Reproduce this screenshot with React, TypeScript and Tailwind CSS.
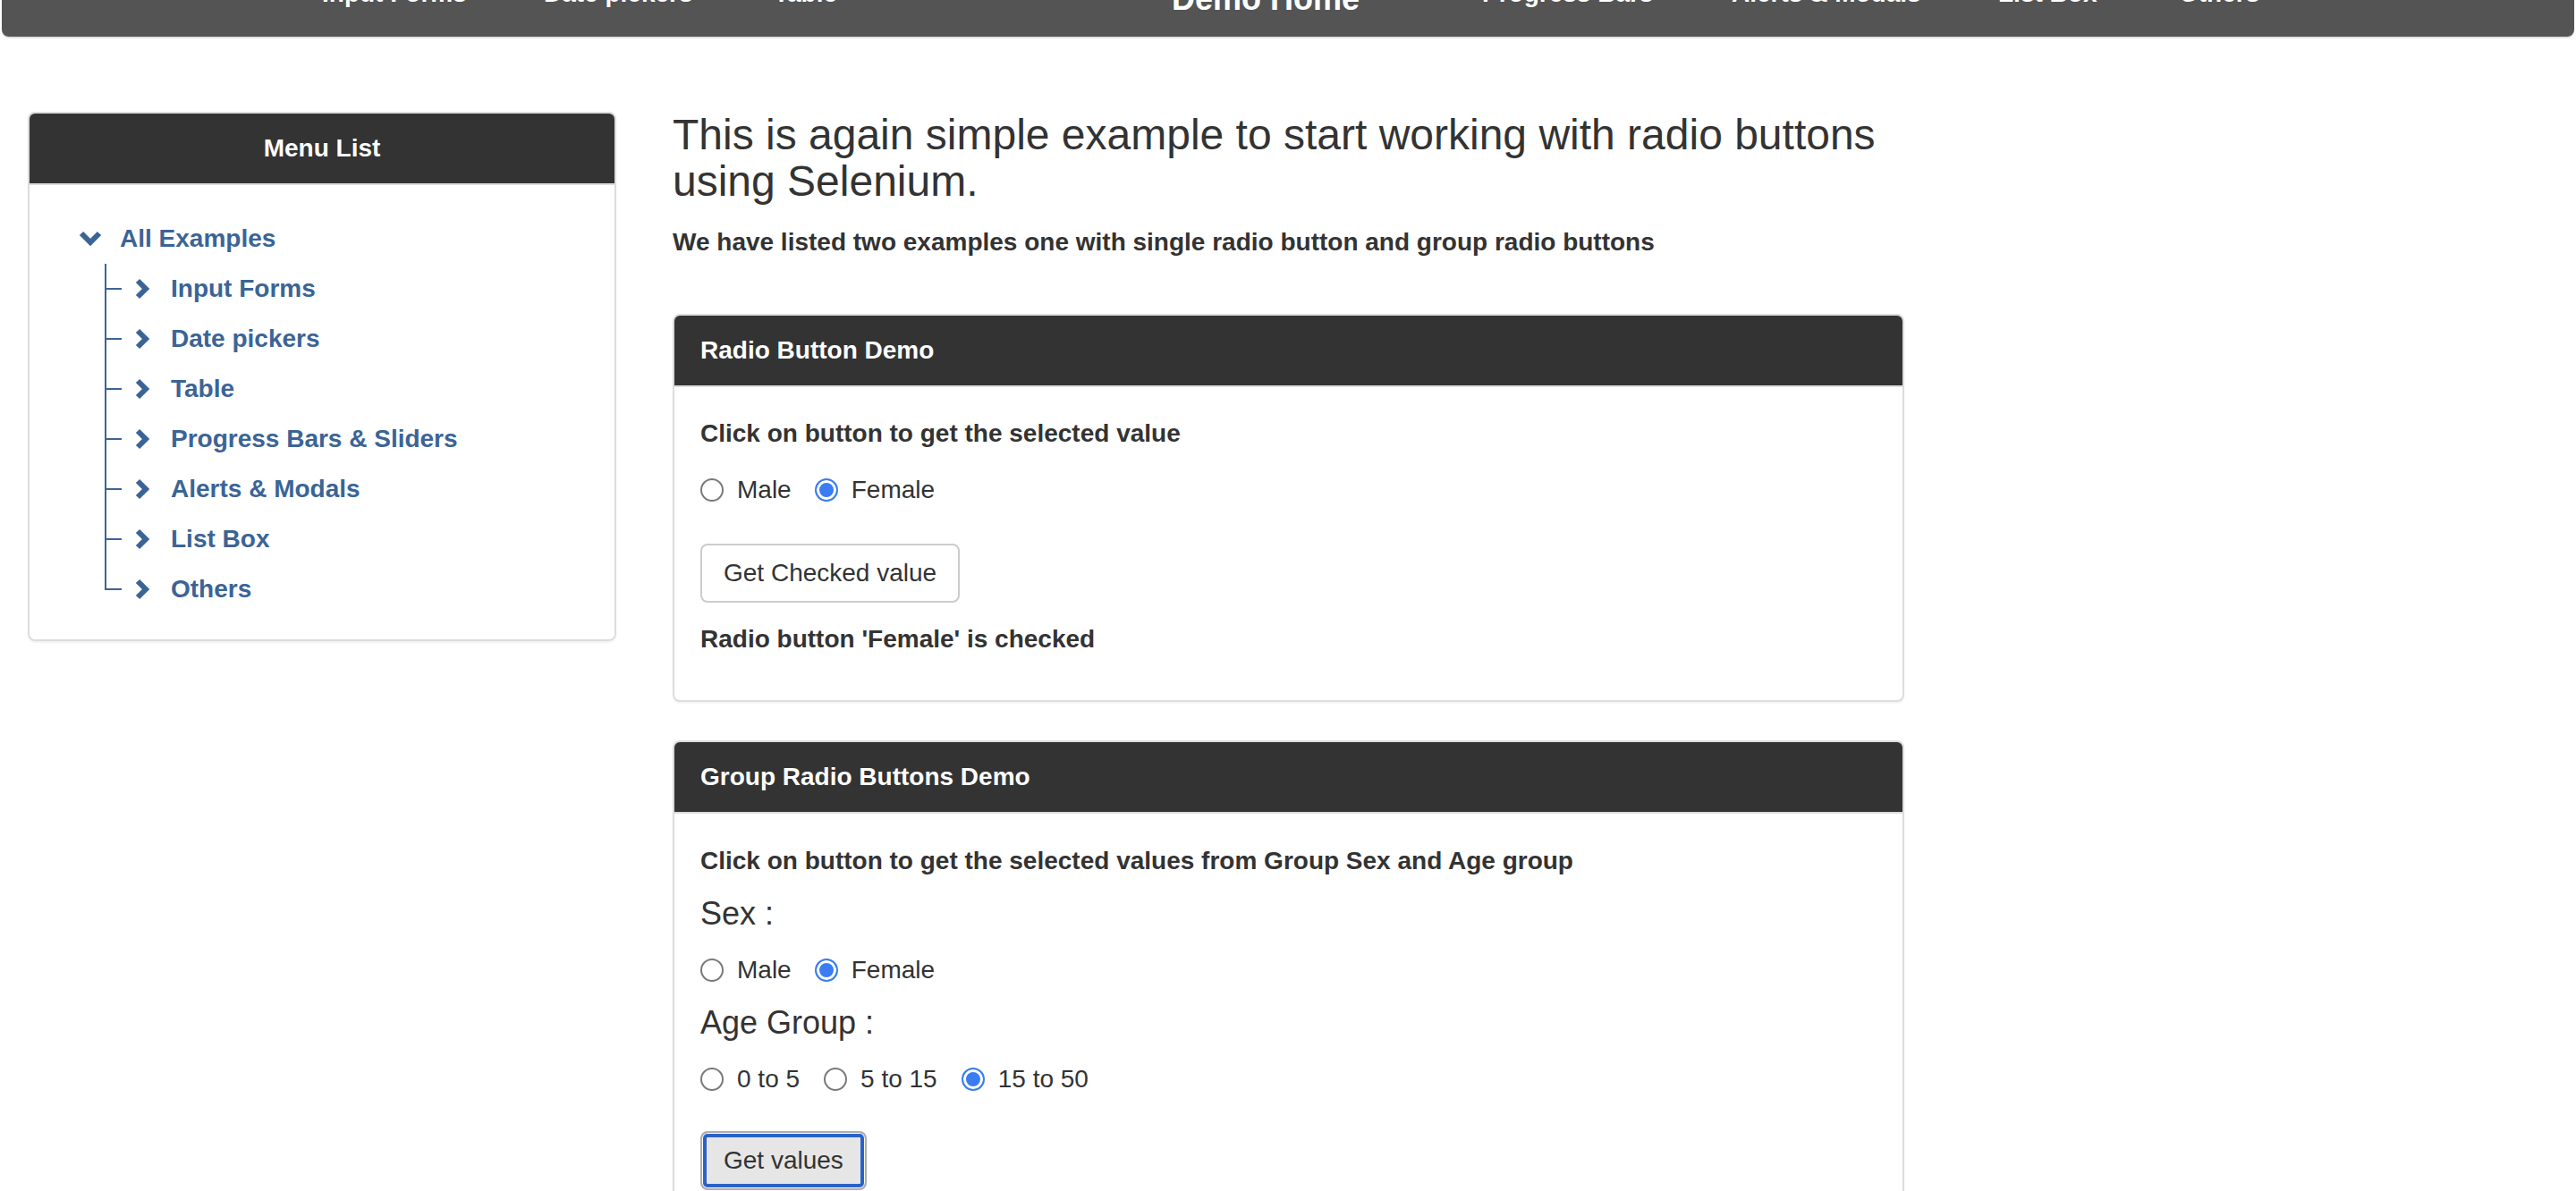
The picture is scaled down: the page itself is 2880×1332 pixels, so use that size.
import React from "react";

const navItems = [
  { label: "Input Forms", box: "w-[248px]", text: "text-[28px] leading-[32px] -mt-[23px]" },
  { label: "Date pickers", box: "w-[257px]", text: "text-[28px] leading-[32px] -mt-[23px]" },
  { label: "Table", box: "w-[445px]", text: "text-[28px] leading-[32px] -mt-[23px]" },
  { label: "Demo Home", box: "w-[347px]", text: "text-[36px] leading-[40px] -mt-[21px]" },
  { label: "Progress Bars", box: "w-[279px]", text: "text-[28px] leading-[32px] -mt-[23px]" },
  { label: "Alerts & Modals", box: "w-[298px]", text: "text-[28px] leading-[32px] -mt-[23px]" },
  { label: "List Box", box: "w-[202px]", text: "text-[28px] leading-[32px] -mt-[23px]" },
  { label: "Others", box: "", text: "text-[28px] leading-[32px] -mt-[23px]" },
];

const menuItems = [
  "Input Forms",
  "Date pickers",
  "Table",
  "Progress Bars & Sliders",
  "Alerts & Modals",
  "List Box",
  "Others",
];

function ChevronDown() {
  return (
    <svg width="26" height="18" viewBox="0 0 26 18" className="shrink-0">
      <polyline points="3,3 13,13 23,3" fill="none" stroke="#3b6496" strokeWidth="6" strokeLinejoin="miter" />
    </svg>
  );
}

function ChevronRight() {
  return (
    <svg width="18" height="24" viewBox="0 0 18 24" className="shrink-0">
      <polyline points="3,3 12,12 3,21" fill="none" stroke="#3b6496" strokeWidth="6" strokeLinejoin="miter" />
    </svg>
  );
}

function Radio({ name, label, checked }: { name: string; label: string; checked?: boolean }) {
  return (
    <label className="flex items-center gap-[15px]">
      <input
        type="radio"
        name={name}
        defaultChecked={checked}
        className="m-0 appearance-none w-[26px] h-[26px] rounded-full border-2 border-[#7a7a7a] bg-white checked:border-[#3a7cf2] checked:bg-[#3a7cf2] checked:shadow-[inset_0_0_0_3px_#fff]"
      />
      <span>{label}</span>
    </label>
  );
}

function Panel({ title, children, className = "" }: { title: string; children: React.ReactNode; className?: string }) {
  return (
    <div className={`border-2 border-[#ddd] rounded-[8px] overflow-hidden bg-white shadow-[0_2px_2px_rgba(0,0,0,0.05)] ${className}`}>
      <div className="h-[80px] bg-[#333] border-b-2 border-[#ddd] flex items-center px-[29px] text-white font-bold text-[28px]">
        {title}
      </div>
      {children}
    </div>
  );
}

export default function App() {
  return (
    <div className="min-h-screen bg-white text-[#333] font-['Liberation_Sans',Arial,sans-serif]">
      {/* Top nav, scrolled so only its bottom edge shows */}
      <nav className="mx-[2px] h-[41px] bg-[#545454] rounded-b-[8px] shadow-[0_2px_0_#e3e3e3] overflow-hidden flex items-start pl-[358px] text-white font-bold">
        {navItems.map((item) => (
          <div key={item.label} className={`${item.box} shrink-0`}>
            <div className={`whitespace-nowrap ${item.text}`}>{item.label}</div>
          </div>
        ))}
      </nav>

      <div className="flex items-start pl-[31px] pt-[84px] gap-[63px]">
        {/* Menu List */}
        <aside className="w-[658px] shrink-0 border-2 border-[#ddd] rounded-[8px] overflow-hidden shadow-[0_2px_2px_rgba(0,0,0,0.05)]">
          <div className="h-[80px] bg-[#333] border-b-2 border-[#ddd] flex items-center justify-center text-white font-bold text-[28px]">
            Menu List
          </div>
          <div className="pt-[32px] pb-[28px] text-[28px] font-bold text-[#3b6496]">
            <div className="h-[56px] flex items-center pl-[55px] gap-[20px]">
              <ChevronDown />
              <span>All Examples</span>
            </div>
            <div className="ml-[84px]">
              {menuItems.map((label, i) => (
                <div key={label} className="relative h-[56px] flex items-center pl-[34px] gap-[22px]">
                  <span className={`absolute left-0 top-0 w-[2px] bg-[#3b6496] ${i === menuItems.length - 1 ? "h-1/2" : "h-full"}`} />
                  <span className="absolute left-0 top-1/2 -mt-[1px] w-[19px] h-[2px] bg-[#3b6496]" />
                  <ChevronRight />
                  <span>{label}</span>
                </div>
              ))}
            </div>
          </div>
        </aside>

        {/* Main content */}
        <main className="w-[1377px] shrink-0">
          <h3 className="text-[48px] leading-[52px] font-normal">
            This is again simple example to start working with radio buttons using Selenium.
          </h3>
          <p className="mt-[22px] text-[28px] leading-[40px] font-bold">
            We have listed two examples one with single radio button and group radio buttons
          </p>

          <Panel title="Radio Button Demo" className="mt-[60px]">
            <div className="px-[29px] pt-[32px] pb-[48px] text-[28px]">
              <p className="leading-[40px] font-bold">Click on button to get the selected value</p>
              <div className="mt-[23px] h-[40px] flex items-center gap-[26px]">
                <Radio name="optradio" label="Male" />
                <Radio name="optradio" label="Female" checked />
              </div>
              <button className="mt-[40px] h-[66px] px-[24px] border-2 border-[#ccc] rounded-[8px] bg-white text-[28px] text-[#333]">
                Get Checked value
              </button>
              <p className="mt-[21px] leading-[40px] font-bold">Radio button 'Female' is checked</p>
            </div>
          </Panel>

          <Panel title="Group Radio Buttons Demo" className="mt-[43px]">
            <div className="px-[29px] pt-[33px] pb-[60px] text-[28px]">
              <p className="leading-[40px] font-bold">
                Click on button to get the selected values from Group Sex and Age group
              </p>
              <div className="mt-[19px] text-[36px] leading-[40px]">Sex :</div>
              <div className="mt-[23px] h-[40px] flex items-center gap-[26px]">
                <Radio name="gender" label="Male" />
                <Radio name="gender" label="Female" checked />
              </div>
              <div className="mt-[19px] text-[36px] leading-[40px]">Age Group :</div>
              <div className="mt-[23px] h-[40px] flex items-center gap-[27px]">
                <Radio name="ageGroup" label="0 to 5" />
                <Radio name="ageGroup" label="5 to 15" />
                <Radio name="ageGroup" label="15 to 50" checked />
              </div>
              <button className="mt-[38px] h-[66px] px-[24px] border-2 border-[#adadad] rounded-[8px] bg-[#e6e6e6] text-[28px] text-[#333] shadow-[inset_0_0_0_1px_#fff,inset_0_0_0_5px_#2a62c9]">
                Get values
              </button>
            </div>
          </Panel>
        </main>
      </div>
    </div>
  );
}
